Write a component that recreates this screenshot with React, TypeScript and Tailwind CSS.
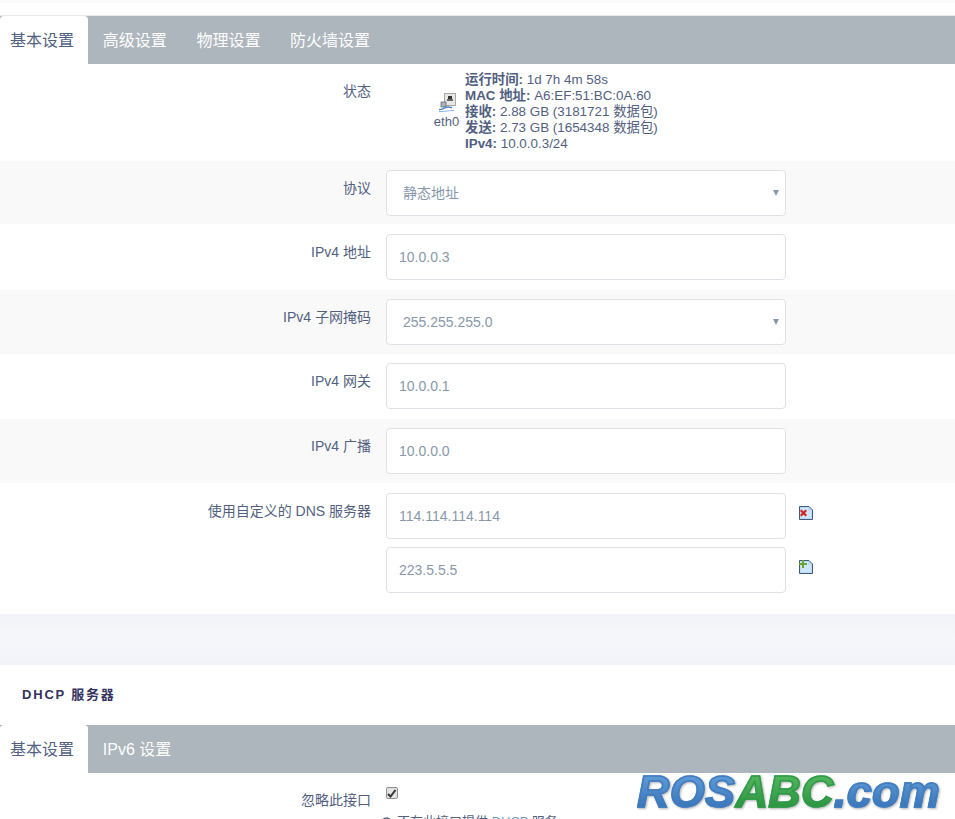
import React from "react";

const fontStack = "font-['Liberation_Sans','Noto_Sans_CJK_SC',sans-serif]";

const EthIcon = () => (
  <svg width="18" height="20" viewBox="0 0 18 20" className="block">
    <rect x="6.500" y="0.500" width="11" height="12" fill="#e6e6e2" stroke="#a8a8a4" />
    <rect x="10" y="3" width="4" height="3" fill="#333" />
    <rect x="9" y="6" width="6" height="2" fill="#666" />
    <rect x="3" y="9" width="5" height="5" fill="#aab2bc" stroke="#59626e" strokeWidth="0.7" />
    <path d="M1 16.500c3 1 5-2 8-2.500 2-.3 3 .5 5 .5" fill="none" stroke="#4d86c9" strokeWidth="1.400" />
    <path d="M1 18.500c4 .5 9-1 15-1" fill="none" stroke="#8fb3de" strokeWidth="1" />
  </svg>
);

const DocIcon = ({ add }: { add?: boolean }) => (
  <svg width="14" height="14" viewBox="0 0 14 14" className="block">
    <path d="M.5.5h9.500l3.500 3.500v9.500h-13z" fill="#bcdcf6" stroke="#41597a" />
    <path d="M2 2h7v3h3v7H2z" fill="#cfe6fa" />
    {add ? (
      <path d="M3 0v3H0v2h3v3h2V5h3V3H5V0z" fill="#6aa62c" />
    ) : (
      <path d="M1 3l1.500-1.500L4.500 3.500 6.500 1.500 8 3 6 5l2 2-1.500 1.500-2-2-2 2L1 7l2-2z" fill="#d81e1e" transform="translate(0 2)" />
    )}
  </svg>
);

const Tabs = ({ items }: { items: string[] }) => (
  <div className="flex h-12 bg-[#adb5bd] text-base leading-[50px]">
    <div className="w-[88px] shrink-0 rounded-t-[4px] bg-white pl-[10px] text-[#525f7f]">基本设置</div>
    {items.map((item) => (
      <div key={item} className="px-[14.8px] text-white">
        {item}
      </div>
    ))}
  </div>
);

const Field = ({ value, select }: { value: string; select?: boolean }) => (
  <div
    className={`relative h-[46px] w-[400px] rounded-[4px] border border-[#dee2e6] bg-white text-sm leading-[44px] text-[#8898aa] ${
      select ? "pl-4" : "pl-[12px]"
    }`}
  >
    {value}
    {select && <span className="absolute right-[6px] top-[19px] h-0 w-0 border-x-[3px] border-t-[6px] border-x-transparent border-t-[#8898aa]" />}
  </div>
);

const Row = ({
  label,
  value,
  select,
  gray,
  top,
  bottom,
}: {
  label: string;
  value: string;
  select?: boolean;
  gray?: boolean;
  top: string;
  bottom: string;
}) => (
  <div className={`flex ${top} ${bottom} ${gray ? "bg-[#f9f9f9]" : "bg-white"}`}>
    <div className="mt-2 w-[371px] text-right text-sm leading-5 text-[#525f7f]">{label}</div>
    <div className="ml-[15px]">
      <Field value={value} select={select} />
    </div>
  </div>
);

const App: React.FC = () => {
  return (
    <div className={`relative h-[819px] w-[955px] overflow-hidden bg-white ${fontStack}`}>
      <div className="h-[3px] bg-[#f9f9f9]" />
      <div className="h-3 bg-white" />
      <div className="h-px bg-[#e9ecef]" />
      <Tabs items={["高级设置", "物理设置", "防火墙设置"]} />

      <div className="flex h-[97px] bg-white">
        <div className="mt-[17px] w-[371px] text-right text-sm leading-5 text-[#525f7f]">状态</div>
        <div className="ml-[62px] mt-[29px] flex w-[27px] flex-col items-center">
          <EthIcon />
          <span className="mt-[1px] text-[13px] leading-4 text-[#525f7f]">eth0</span>
        </div>
        <div className="ml-[5px] mt-2 text-[13.4px] leading-4 text-[#525f7f]">
          <div><b>运行时间:</b> 1d 7h 4m 58s</div>
          <div><b>MAC 地址:</b> A6:EF:51:BC:0A:60</div>
          <div><b>接收:</b> 2.88 GB (3181721 数据包)</div>
          <div><b>发送:</b> 2.73 GB (1654348 数据包)</div>
          <div><b>IPv4:</b> 10.0.0.3/24</div>
        </div>
      </div>

      <Row label="协议" value="静态地址" select gray top="pt-[9px]" bottom="pb-2" />
      <Row label="IPv4 地址" value="10.0.0.3" top="pt-[10px]" bottom="pb-[10px]" />
      <Row label="IPv4 子网掩码" value="255.255.255.0" select gray top="pt-[9px]" bottom="pb-[9px]" />
      <Row label="IPv4 网关" value="10.0.0.1" top="pt-[9px]" bottom="pb-[10px]" />
      <Row label="IPv4 广播" value="10.0.0.0" gray top="pt-[9px]" bottom="pb-[9px]" />

      <div className="flex h-[131px] bg-white pt-[10px]">
        <div className="mt-2 w-[371px] text-right text-sm leading-5 text-[#525f7f]">使用自定义的 DNS 服务器</div>
        <div className="ml-[15px] flex flex-col gap-2">
          <div className="flex">
            <Field value="114.114.114.114" />
            <div className="ml-[13px] mt-[13px]"><DocIcon /></div>
          </div>
          <div className="flex">
            <Field value="223.5.5.5" />
            <div className="ml-[13px] mt-[13px]"><DocIcon add /></div>
          </div>
        </div>
      </div>

      <div className="h-[51px] bg-gradient-to-b from-[#f1f3f8] via-[#f6f7fb] to-[#f1f3f8]" />

      <div className="h-[60px] bg-white pl-[22px] pt-[20px] text-[13px] font-bold leading-[20px] tracking-[1.8px] text-[#32325d]">
        DHCP 服务器
      </div>
      <Tabs items={["IPv6 设置"]} />

      <div className="flex bg-white">
        <div className="mt-[17px] w-[371px] text-right text-sm leading-5 text-[#525f7f]">忽略此接口</div>
        <div className="ml-[15px]">
          <div className="mt-[14px] flex h-3 w-3 items-center justify-center rounded-[2px] border border-[#8f8f8f] bg-[#e3e3e3]">
            <svg width="10" height="9" viewBox="0 0 10 9">
              <path d="M1 5l2.500 2.500L8.500 1" fill="none" stroke="#333" strokeWidth="2" />
            </svg>
          </div>
          <div className="-ml-[5px] mt-[13px] flex items-center gap-[5px] text-[13px] leading-5 text-[#525f7f]">
            <svg width="11" height="11" viewBox="0 0 11 11">
              <circle cx="5.500" cy="5.500" r="4.500" fill="none" stroke="#525f7f" strokeWidth="1.500" />
            </svg>
            <span>不在此接口提供 <span className="text-[#6f9bc8]">DHCP</span> 服务。</span>
          </div>
        </div>
      </div>

      <div className="absolute left-[637px] top-[767px] whitespace-nowrap font-['Liberation_Sans',sans-serif] text-[45px] font-bold italic leading-[50px] tracking-[0.3px] drop-shadow-[1px_1px_1px_rgba(0,0,0,0.3)]">
        <span className="bg-gradient-to-b from-[#6aa6de] to-[#2f6bb0] bg-clip-text text-transparent [-webkit-text-stroke:1.5px_#3f7cc0]">ROS</span>
        <span className="bg-gradient-to-b from-[#5cc066] to-[#1f8a3a] bg-clip-text text-transparent [-webkit-text-stroke:1.5px_#2f9a48]">ABC</span>
        <span className="bg-gradient-to-b from-[#6aa6de] to-[#2f6bb0] bg-clip-text text-transparent [-webkit-text-stroke:1.5px_#3f7cc0]">.com</span>
      </div>
    </div>
  );
};

export default App;
